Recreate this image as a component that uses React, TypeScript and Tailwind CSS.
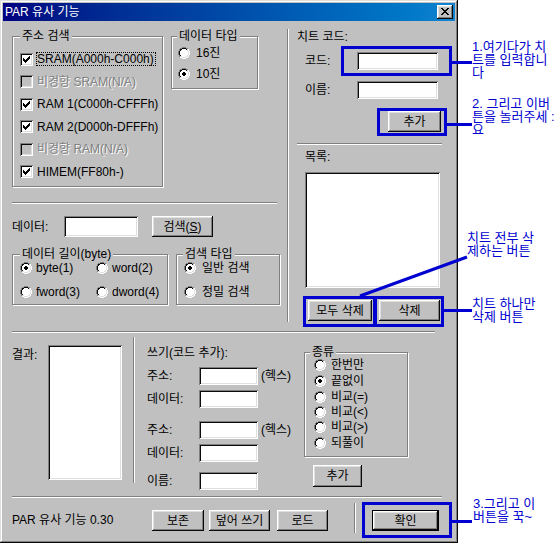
import React from "react";

type ColorFn = (ch: string, x: number, y: number) => string | null;

function Pixels({ rows, color }: { rows: string[]; color: ColorFn }) {
  const w = rows[0].length;
  const h = rows.length;
  const rects: React.ReactElement[] = [];
  rows.forEach((r, y) => {
    for (let x = 0; x < w; x++) {
      const c = color(r[x], x, y);
      if (c) rects.push(<rect key={x + "-" + y} x={x} y={y} width={1} height={1} fill={c} />);
    }
  });
  return (
    <svg width={w} height={h} viewBox={`0 0 ${w} ${h}`} shapeRendering="crispEdges" className="block shrink-0">
      {rects}
    </svg>
  );
}

const RADIO = [
  "....oooo....",
  "..ooiiiioo..",
  ".oiiffffiio.",
  ".oiffffffio.",
  "oiffffffffio",
  "oiffffffffio",
  "oiffffffffio",
  "oiffffffffio",
  ".oiffffffio.",
  ".oiiffffiio.",
  "..ooiiiioo..",
  "....oooo....",
];
const DOT = new Set(["5,4", "6,4", "4,5", "5,5", "6,5", "7,5", "4,6", "5,6", "6,6", "7,6", "5,7", "6,7"]);

function Radio({ checked = false }: { checked?: boolean }) {
  return (
    <Pixels
      rows={RADIO}
      color={(ch, x, y) => {
        const tl = x + y < 11;
        if (ch === "o") return tl ? "#808080" : "#ffffff";
        if (ch === "i") return tl ? "#0a0a0a" : "#dfdfdf";
        if (ch === "f") return checked && DOT.has(`${x},${y}`) ? "#000000" : "#ffffff";
        return null;
      }}
    />
  );
}

const CHECK = ["......x", ".....xx", "x...xxx", "xx.xxx.", "xxxxx..", ".xxx...", "..x...."];
const XR = ["xx....xx", ".xx..xx.", "..xxxx..", "...xx...", "..xxxx..", ".xx..xx.", "xx....xx"];

const SUNKEN =
  "shadow-[inset_1px_1px_#808080,inset_-1px_-1px_#ffffff,inset_2px_2px_#0a0a0a,inset_-2px_-2px_#dfdfdf]";
const RAISED =
  "bg-[#c0c0c0] shadow-[inset_-1px_-1px_#0a0a0a,inset_1px_1px_#ffffff,inset_-2px_-2px_#808080,inset_2px_2px_#dfdfdf]";

function Checkbox({ checked, disabled }: { checked?: boolean; disabled?: boolean }) {
  return (
    <div
      className={`w-[13px] h-[13px] shrink-0 flex items-center justify-center ${
        disabled ? "bg-[#c0c0c0]" : "bg-white"
      } ${SUNKEN}`}
    >
      {checked && <Pixels rows={CHECK} color={(ch) => (ch === "x" ? "#000000" : null)} />}
    </div>
  );
}

function CheckRow({
  label,
  checked,
  disabled,
  focus,
  h,
}: {
  label: string;
  checked?: boolean;
  disabled?: boolean;
  focus?: boolean;
  h: string;
}) {
  return (
    <div className={`flex items-center ${h}`}>
      <Checkbox checked={checked} disabled={disabled} />
      <span
        className={`ml-[3px] leading-[12px] border pr-[1px] whitespace-nowrap ${
          focus ? "border-dotted border-black" : "border-transparent"
        } ${disabled ? "text-[#808080] [text-shadow:1px_1px_0_#ffffff]" : ""}`}
      >
        {label}
      </span>
    </div>
  );
}

function RadioLabel({ label, checked, gap }: { label: string; checked?: boolean; gap: string }) {
  return (
    <div className="flex items-center">
      <Radio checked={checked} />
      <span className={`${gap} leading-[14px] whitespace-nowrap`}>{label}</span>
    </div>
  );
}

function Group({
  title,
  titleLeft,
  className,
  children,
}: {
  title: string;
  titleLeft: string;
  className: string;
  children?: React.ReactNode;
}) {
  return (
    <div
      className={`relative shrink-0 border border-[#808080] shadow-[inset_1px_1px_#ffffff,1px_1px_#ffffff] ${className}`}
    >
      <span
        className={`absolute top-[-8px] ${titleLeft} px-[2px] bg-[#c0c0c0] leading-[14px] whitespace-nowrap`}
      >
        {title}
      </span>
      {children}
    </div>
  );
}

function Button({ className, children, def }: { className: string; children: React.ReactNode; def?: boolean }) {
  if (def) {
    return (
      <div className={`shrink-0 border border-black flex ${className}`}>
        <div className={`flex-1 flex items-center justify-center leading-[14px] ${RAISED}`}>{children}</div>
      </div>
    );
  }
  return (
    <div className={`shrink-0 flex items-center justify-center leading-[14px] ${RAISED} ${className}`}>
      {children}
    </div>
  );
}

function Field({ className }: { className: string }) {
  return <div className={`shrink-0 bg-white ${SUNKEN} ${className}`} />;
}

const HSEP = "shrink-0 h-[2px] border-t border-t-[#808080] border-b border-b-white";
const VSEP = "shrink-0 w-[2px] border-l border-l-[#808080] border-r border-r-white";

export default function App() {
  return (
    <div className="relative w-[556px] h-[543px] bg-white overflow-hidden font-['Liberation_Sans','Noto_Sans_CJK_KR',sans-serif] text-[12px] text-black">
      {/* Window */}
      <div className="w-[458px] h-[543px] bg-[#c0c0c0] p-[3px] flex flex-col shadow-[inset_-1px_-1px_#0a0a0a,inset_1px_1px_#dfdfdf,inset_-2px_-2px_#808080,inset_2px_2px_#ffffff]">
        {/* Title bar */}
        <div className="h-[18px] shrink-0 flex items-center justify-between pl-[2px] pr-[2px] bg-gradient-to-r from-[#000080] to-[#1084d0]">
          <span className="text-white text-[12px] leading-[14px] whitespace-nowrap">PAR 유사 기능</span>
          <div className={`w-[16px] h-[14px] pl-[4px] pt-[3px] ${RAISED}`}>
            <Pixels rows={XR} color={(ch) => (ch === "x" ? "#000000" : null)} />
          </div>
        </div>

        {/* Body */}
        <div className="flex flex-col pl-[9px]">
          {/* Top section */}
          <div className="flex h-[310px] items-start">
            {/* Left column */}
            <div className="w-[268px] shrink-0 flex flex-col">
              <div className="flex gap-[8px] mt-[15px] items-start">
                <Group title="주소 검색" titleLeft="left-[7px]" className="w-[151px] h-[151px] pl-[7px] pt-[11px]">
                  <CheckRow h="h-[22px]" label="SRAM(A000h-C000h)" checked focus />
                  <CheckRow h="h-[23px]" label="비경향 SRAM(N/A)" disabled />
                  <CheckRow h="h-[22px]" label="RAM 1(C000h-CFFFh)" checked />
                  <CheckRow h="h-[23px]" label="RAM 2(D000h-DFFFh)" checked />
                  <CheckRow h="h-[22px]" label="비경향 RAM(N/A)" disabled />
                  <CheckRow h="h-[23px]" label="HIMEM(FF80h-)" checked />
                </Group>
                <Group title="데이터 타입" titleLeft="left-[5px]" className="w-[87px] h-[53px] pl-[6px] pt-[5px]">
                  <div className="h-[21px] flex items-center">
                    <RadioLabel label="16진" gap="ml-[6px]" />
                  </div>
                  <div className="h-[21px] flex items-center">
                    <RadioLabel label="10진" gap="ml-[6px]" checked />
                  </div>
                </Group>
              </div>
              <div className={`${HSEP} w-[265px] mt-[15px]`} />
              <div className="flex items-center mt-[12px] h-[21px]">
                <span className="w-[52px] shrink-0 leading-[14px]">데이터:</span>
                <Field className="w-[74px] h-[21px]" />
                <Button className="ml-[14px] w-[61px] h-[21px]">
                  검색(<span className="underline underline-offset-[1px]">S</span>)
                </Button>
              </div>
              <div className="flex gap-[8px] mt-[17px] items-start">
                <Group title="데이터 길이(byte)" titleLeft="left-[7px]" className="w-[156px] h-[51px] pl-[7px] pt-[1px]">
                  <div className="h-[24px] flex items-center">
                    <div className="w-[76px] shrink-0">
                      <RadioLabel label="byte(1)" gap="ml-[4px]" checked />
                    </div>
                    <RadioLabel label="word(2)" gap="ml-[4px]" />
                  </div>
                  <div className="h-[24px] flex items-center">
                    <div className="w-[76px] shrink-0">
                      <RadioLabel label="fword(3)" gap="ml-[4px]" />
                    </div>
                    <RadioLabel label="dword(4)" gap="ml-[4px]" />
                  </div>
                </Group>
                <Group title="검색 타입" titleLeft="left-[6px]" className="w-[104px] h-[51px] pl-[7px] pt-[1px]">
                  <div className="h-[24px] flex items-center">
                    <RadioLabel label="일반 검색" gap="ml-[6px]" checked />
                  </div>
                  <div className="h-[24px] flex items-center">
                    <RadioLabel label="정밀 검색" gap="ml-[6px]" />
                  </div>
                </Group>
              </div>
            </div>

            <div className={`${VSEP} ml-[7px] mt-[8px] h-[293px]`} />

            {/* Right column */}
            <div className="flex flex-col pl-[8px]">
              <span className="mt-[9px] h-[14px] leading-[14px] whitespace-nowrap">치트 코드:</span>
              <div className="flex items-center mt-[8px] ml-[8px] h-[18px]">
                <span className="w-[52px] shrink-0 leading-[14px]">코드:</span>
                <Field className="w-[81px] h-[18px]" />
              </div>
              <div className="flex items-center mt-[11px] ml-[8px] h-[18px]">
                <span className="w-[52px] shrink-0 leading-[14px]">이름:</span>
                <Field className="w-[81px] h-[18px]" />
              </div>
              <Button className="mt-[12px] ml-[91px] w-[53px] h-[21px]">추가</Button>
              <div className={`${HSEP} w-[145px] mt-[11px]`} />
              <span className="mt-[5px] ml-[8px] h-[14px] leading-[14px]">목록:</span>
              <Field className="mt-[8px] ml-[8px] w-[135px] h-[116px]" />
              <div className="flex mt-[12px] ml-[11px] gap-[7px]">
                <Button className="w-[64px] h-[21px]">모두 삭제</Button>
                <Button className="w-[61px] h-[21px]">삭제</Button>
              </div>
            </div>
          </div>

          <div className={`${HSEP} w-[423px]`} />

          {/* Bottom section */}
          <div className="flex h-[163px] items-start">
            <span className="w-[36px] shrink-0 mt-[15px] leading-[14px]">결과:</span>
            <Field className="mt-[12px] w-[74px] h-[135px]" />
            <div className={`${VSEP} ml-[11px] mt-[4px] h-[146px]`} />
            <div className="ml-[12px] w-[157px] shrink-0 flex flex-col">
              <span className="mt-[13px] h-[14px] leading-[14px] whitespace-nowrap">쓰기(코드 추가):</span>
              <div className="flex items-center mt-[7px] h-[18px]">
                <span className="w-[52px] shrink-0 leading-[14px]">주소:</span>
                <Field className="w-[59px] h-[18px]" />
                <span className="ml-[3px] leading-[14px] whitespace-nowrap">(헥스)</span>
              </div>
              <div className="flex items-center mt-[5px] h-[18px]">
                <span className="w-[52px] shrink-0 leading-[14px]">데이터:</span>
                <Field className="w-[59px] h-[18px]" />
              </div>
              <div className="flex items-center mt-[13px] h-[18px]">
                <span className="w-[52px] shrink-0 leading-[14px]">주소:</span>
                <Field className="w-[59px] h-[18px]" />
                <span className="ml-[3px] leading-[14px] whitespace-nowrap">(헥스)</span>
              </div>
              <div className="flex items-center mt-[5px] h-[18px]">
                <span className="w-[52px] shrink-0 leading-[14px]">데이터:</span>
                <Field className="w-[59px] h-[18px]" />
              </div>
              <div className="flex items-center mt-[10px] h-[18px]">
                <span className="w-[52px] shrink-0 leading-[14px]">이름:</span>
                <Field className="w-[59px] h-[18px]" />
              </div>
            </div>
            <div className="flex flex-col">
              <Group title="종류" titleLeft="left-[5px]" className="mt-[19px] w-[104px] h-[105px] pl-[9px] pt-[4px]">
                <div className="h-[16px] flex items-center">
                  <RadioLabel label="한번만" gap="ml-[5px]" />
                </div>
                <div className="h-[16px] flex items-center">
                  <RadioLabel label="끝없이" gap="ml-[5px]" checked />
                </div>
                <div className="h-[15px] flex items-center">
                  <RadioLabel label="비교(=)" gap="ml-[5px]" />
                </div>
                <div className="h-[15px] flex items-center">
                  <RadioLabel label="비교(<)" gap="ml-[5px]" />
                </div>
                <div className="h-[16px] flex items-center">
                  <RadioLabel label="비교(>)" gap="ml-[5px]" />
                </div>
                <div className="h-[15px] flex items-center">
                  <RadioLabel label="되풀이" gap="ml-[5px]" />
                </div>
              </Group>
              <Button className="mt-[8px] ml-[9px] w-[49px] h-[22px]">추가</Button>
            </div>
          </div>

          <div className={`${HSEP} w-[430px]`} />

          {/* Status row */}
          <div className="flex items-start">
            <span className="w-[140px] shrink-0 mt-[15px] leading-[14px] whitespace-nowrap">PAR 유사 기능 0.30</span>
            <Button className="mt-[12px] w-[52px] h-[21px]">보존</Button>
            <Button className="mt-[12px] ml-[5px] w-[61px] h-[21px]">덮어 쓰기</Button>
            <Button className="mt-[12px] ml-[7px] w-[51px] h-[21px]">로드</Button>
            <div className={`${VSEP} ml-[26px] mt-[5px] h-[30px]`} />
            <Button def className="mt-[12px] ml-[16px] w-[67px] h-[21px]">
              확인
            </Button>
          </div>
        </div>
      </div>

      {/* Annotations (overlay) */}
      <div className="absolute left-[341px] top-[46px] w-[111px] h-[30px] border-[3px] border-[#0000d0]" />
      <div className="absolute left-[452px] top-[61px] w-[20px] h-[3px] bg-[#0000d0]" />
      <div className="absolute left-[472px] top-[40px] text-[13px] leading-[13px] text-[#0000d0] whitespace-nowrap">
        <div>1.여기다가 치</div>
        <div>트를 입력합니</div>
        <div>다</div>
      </div>

      <div className="absolute left-[377px] top-[108px] w-[70px] h-[28px] border-[3px] border-[#0000d0]" />
      <div className="absolute left-[447px] top-[123px] w-[25px] h-[3px] bg-[#0000d0]" />
      <div className="absolute left-[472px] top-[97px] text-[13px] leading-[13px] text-[#0000d0] whitespace-nowrap">
        <div>2. 그리고 이버</div>
        <div>튼을 놀러주세 :</div>
        <div>요</div>
      </div>

      <div className="absolute left-[303px] top-[296px] w-[73px] h-[31px] border-[3px] border-[#0000d0]" />
      <div className="absolute left-[374px] top-[296px] w-[70px] h-[31px] border-[3px] border-[#0000d0]" />
      <div className="absolute left-[444px] top-[309px] w-[28px] h-[3px] bg-[#0000d0]" />
      <svg className="absolute left-0 top-0" width={556} height={543} viewBox="0 0 556 543">
        <line x1={360} y1={296} x2={467} y2={257} stroke="#0000d0" strokeWidth={3} />
      </svg>
      <div className="absolute left-[467px] top-[231px] text-[13px] leading-[13px] text-[#0000d0] whitespace-nowrap">
        <div>치트 전부 삭</div>
        <div>제하는 버튼</div>
      </div>
      <div className="absolute left-[472px] top-[297px] text-[13px] leading-[13px] text-[#0000d0] whitespace-nowrap">
        <div>치트 하나만</div>
        <div>삭제 버튼</div>
      </div>

      <div className="absolute left-[362px] top-[502px] w-[90px] h-[36px] border-[3px] border-[#0000d0]" />
      <div className="absolute left-[452px] top-[520px] w-[20px] h-[3px] bg-[#0000d0]" />
      <div className="absolute left-[473px] top-[497px] text-[13px] leading-[13px] text-[#0000d0] whitespace-nowrap">
        <div>3.그리고 이</div>
        <div>버튼을 꾹~</div>
      </div>
    </div>
  );
}
